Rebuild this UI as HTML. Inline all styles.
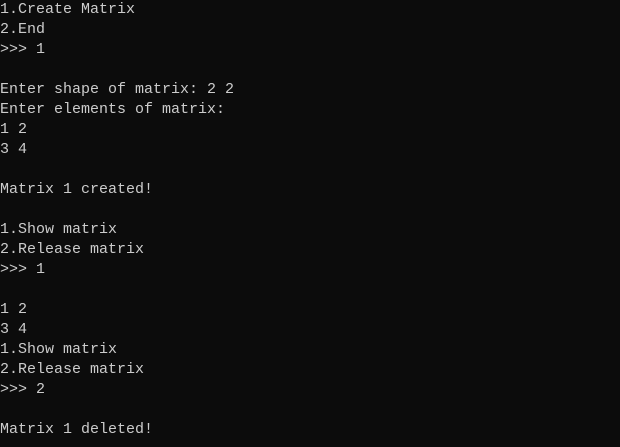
<!DOCTYPE html>
<html><head><meta charset="utf-8"><style>
html,body{margin:0;padding:0;background:#0c0c0c;width:620px;height:447px;overflow:hidden}
pre{margin:0;padding:0 0 0 0;position:absolute;top:0;left:0;font-family:"Liberation Mono",monospace;font-size:15px;line-height:20px;color:#cccccc}
</style></head><body><pre>1.Create Matrix
2.End
>>> 1

Enter shape of matrix: 2 2
Enter elements of matrix:
1 2
3 4

Matrix 1 created!

1.Show matrix
2.Release matrix
>>> 1

1 2
3 4
1.Show matrix
2.Release matrix
>>> 2

Matrix 1 deleted!</pre></body></html>
